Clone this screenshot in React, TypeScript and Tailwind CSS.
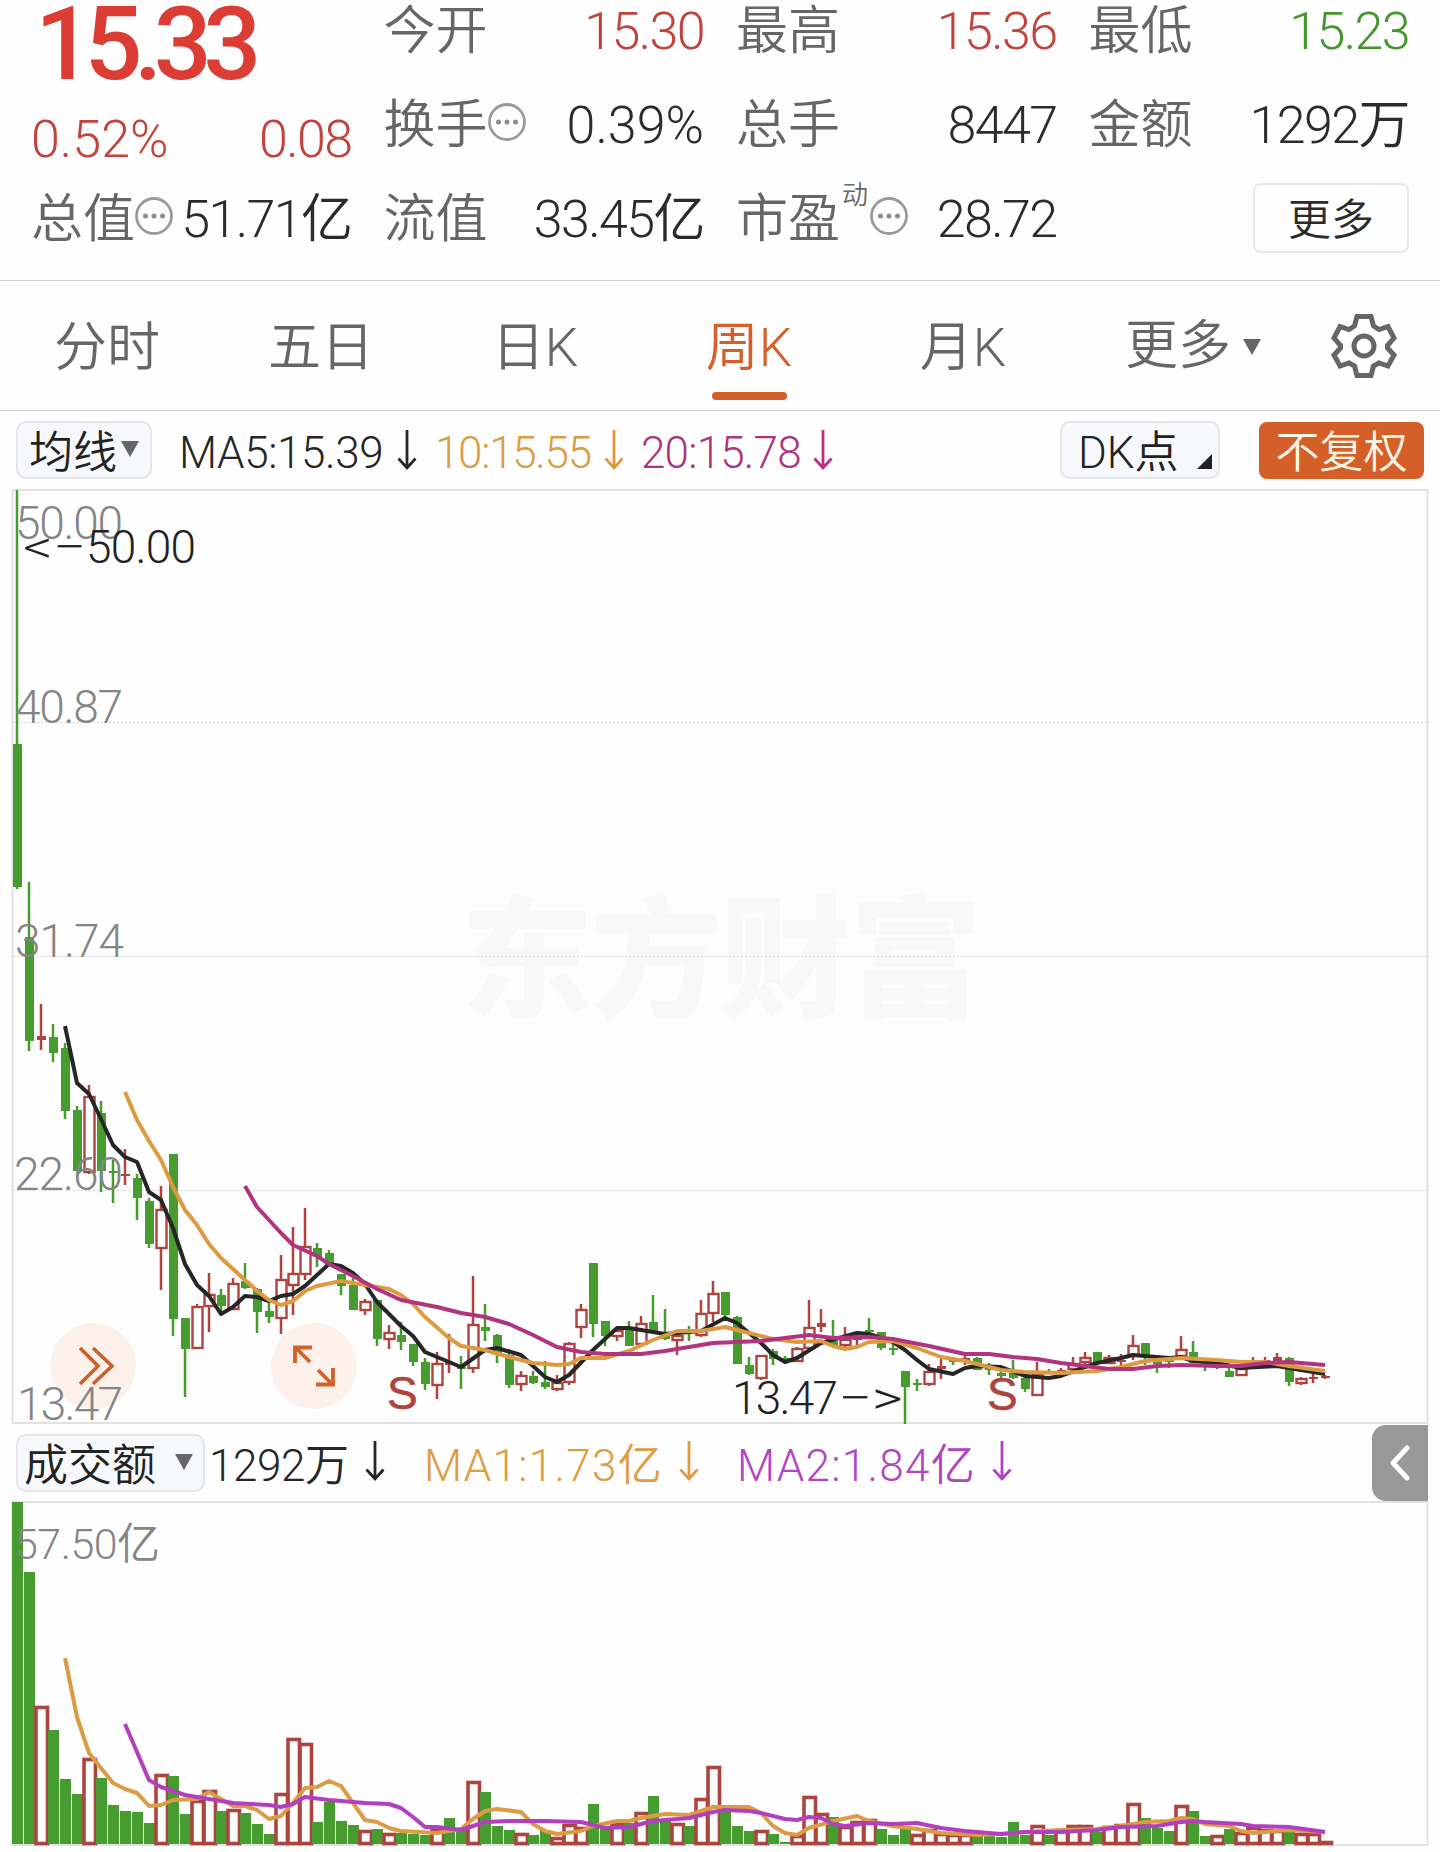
import clsx from "clsx";

type Candle = [up: 0 | 1, high: number, top: number, bottom: number, low: number];
type Volume = [up: 0 | 1, top: number];

const GREEN = "#479c2f";
const RED = "#ac453f";

// one entry per week: direction, wick top, body top, body bottom, wick bottom
const candles: Candle[] = [
  [0, 490, 744, 887, 889], [0, 882, 937, 1041, 1051], [1, 1004, 1036, 1040, 1050], [0, 1024, 1037, 1053, 1062],
  [0, 1043, 1048, 1111, 1119], [0, 1106, 1110, 1171, 1171], [1, 1085, 1096, 1172, 1174], [0, 1101, 1113, 1171, 1192],
  [0, 1160, 1171, 1173, 1203], [1, 1149, 1174, 1176, 1185], [0, 1174, 1178, 1198, 1220], [0, 1198, 1201, 1244, 1248],
  [1, 1186, 1209, 1248, 1290], [0, 1154, 1154, 1319, 1336], [0, 1318, 1318, 1349, 1397], [1, 1304, 1306, 1348, 1348],
  [1, 1273, 1294, 1306, 1332], [0, 1289, 1295, 1306, 1311], [1, 1278, 1283, 1309, 1309], [0, 1263, 1281, 1288, 1289],
  [0, 1288, 1289, 1312, 1333], [0, 1300, 1311, 1317, 1323], [1, 1255, 1279, 1318, 1334], [1, 1227, 1273, 1285, 1315],
  [1, 1208, 1246, 1274, 1280], [0, 1243, 1248, 1257, 1267], [0, 1250, 1253, 1266, 1266], [0, 1274, 1274, 1286, 1295],
  [0, 1274, 1285, 1310, 1310], [1, 1299, 1301, 1310, 1315], [0, 1300, 1300, 1339, 1346], [1, 1325, 1332, 1339, 1349],
  [0, 1322, 1335, 1342, 1350], [0, 1344, 1344, 1362, 1366], [0, 1358, 1362, 1384, 1390], [1, 1352, 1363, 1385, 1399],
  [1, 1334, 1362, 1365, 1373], [0, 1356, 1367, 1369, 1389], [1, 1276, 1324, 1368, 1373], [0, 1304, 1327, 1331, 1341],
  [0, 1334, 1335, 1355, 1363], [0, 1349, 1355, 1385, 1388], [1, 1371, 1375, 1384, 1391], [0, 1371, 1376, 1383, 1384],
  [0, 1361, 1382, 1387, 1389], [1, 1375, 1382, 1389, 1391], [1, 1342, 1343, 1382, 1385], [1, 1304, 1309, 1327, 1338],
  [0, 1263, 1263, 1324, 1337], [0, 1321, 1321, 1336, 1346], [1, 1327, 1330, 1336, 1341], [0, 1321, 1327, 1346, 1346],
  [1, 1316, 1323, 1344, 1344], [0, 1295, 1322, 1333, 1333], [0, 1309, 1335, 1339, 1340], [1, 1333, 1335, 1340, 1355],
  [0, 1326, 1329, 1332, 1341], [1, 1300, 1313, 1335, 1337], [1, 1281, 1293, 1313, 1322], [0, 1292, 1292, 1315, 1319],
  [0, 1316, 1317, 1364, 1364], [0, 1357, 1365, 1374, 1375], [1, 1355, 1355, 1378, 1380], [0, 1349, 1351, 1359, 1365],
  [0, 1356, 1358, 1361, 1362], [1, 1347, 1348, 1361, 1361], [1, 1300, 1327, 1348, 1348], [1, 1309, 1323, 1327, 1332],
  [0, 1320, 1341, 1346, 1346], [1, 1327, 1339, 1345, 1347], [1, 1335, 1338, 1340, 1345], [0, 1318, 1330, 1332, 1333],
  [0, 1332, 1332, 1348, 1350], [0, 1344, 1348, 1350, 1355], [0, 1371, 1371, 1387, 1424], [0, 1379, 1383, 1385, 1391],
  [1, 1364, 1371, 1384, 1386], [1, 1359, 1366, 1369, 1379], [0, 1357, 1360, 1362, 1365], [1, 1355, 1358, 1361, 1365],
  [0, 1357, 1358, 1370, 1370], [0, 1363, 1368, 1370, 1375], [0, 1370, 1373, 1376, 1380], [0, 1360, 1373, 1378, 1379],
  [0, 1377, 1378, 1389, 1392], [1, 1362, 1374, 1395, 1395], [0, 1369, 1371, 1373, 1374], [1, 1368, 1370, 1374, 1374],
  [1, 1357, 1363, 1369, 1369], [1, 1352, 1357, 1362, 1365], [0, 1352, 1352, 1362, 1362], [1, 1355, 1357, 1363, 1363],
  [1, 1354, 1360, 1362, 1366], [1, 1335, 1345, 1355, 1360], [0, 1343, 1343, 1355, 1365], [0, 1358, 1360, 1364, 1373],
  [0, 1357, 1360, 1362, 1368], [1, 1336, 1349, 1356, 1358], [0, 1341, 1352, 1363, 1363], [0, 1360, 1363, 1365, 1371],
  [1, 1362, 1366, 1368, 1369], [0, 1367, 1371, 1377, 1377], [1, 1368, 1368, 1375, 1376], [1, 1357, 1363, 1365, 1366],
  [1, 1357, 1360, 1363, 1363], [1, 1353, 1357, 1361, 1362], [0, 1357, 1358, 1382, 1386], [1, 1377, 1378, 1383, 1385],
  [1, 1374, 1377, 1379, 1383], [1, 1375, 1376, 1378, 1379],
];

const volumes: Volume[] = [
  [0, 1502], [0, 1572], [1, 1706], [0, 1730], [0, 1779], [0, 1794], [1, 1758], [0, 1778], [0, 1805], [0, 1811],
  [0, 1812], [0, 1823], [1, 1774], [0, 1776], [0, 1814], [1, 1800], [1, 1790], [0, 1811], [1, 1809], [0, 1813],
  [0, 1824], [0, 1834], [1, 1793], [1, 1738], [1, 1743], [0, 1822], [0, 1802], [0, 1821], [0, 1825], [1, 1830],
  [0, 1829], [1, 1833], [0, 1833], [0, 1834], [0, 1835], [1, 1829], [0, 1818], [0, 1830], [1, 1781], [0, 1792],
  [0, 1826], [0, 1830], [1, 1833], [0, 1835], [0, 1830], [1, 1837], [1, 1824], [1, 1827], [0, 1804], [0, 1828],
  [1, 1823], [0, 1823], [1, 1812], [0, 1796], [0, 1820], [1, 1823], [0, 1826], [1, 1798], [1, 1766], [0, 1812],
  [0, 1826], [0, 1831], [1, 1830], [0, 1834], [0, 1842], [1, 1835], [1, 1796], [1, 1813], [0, 1817], [1, 1826],
  [1, 1821], [1, 1819], [0, 1829], [0, 1835], [0, 1828], [1, 1834], [1, 1829], [1, 1833], [1, 1834], [1, 1834],
  [0, 1836], [0, 1836], [0, 1837], [0, 1822], [0, 1835], [1, 1825], [0, 1835], [1, 1829], [1, 1825], [1, 1825],
  [0, 1832], [1, 1826], [1, 1824], [1, 1803], [0, 1818], [0, 1828], [0, 1831], [1, 1805], [0, 1811], [0, 1836],
  [1, 1835], [0, 1829], [1, 1832], [1, 1827], [1, 1829], [1, 1830], [0, 1830], [1, 1833], [1, 1833], [1, 1841],
];

const ma5 =
  "65,1026 77,1083 89,1094 101,1119 113,1145 125,1157 137,1162 149,1192 161,1200 173,1228 185,1264 197,1285 209,1296 221,1314 233,1307 245,1296 257,1297 269,1301 281,1296 293,1294 305,1286 329,1264 341,1266 353,1273 365,1284 377,1302 389,1314 401,1326 413,1336 425,1352 461,1367 485,1350 497,1348 521,1355 533,1366 545,1377 557,1382 569,1375 593,1350 617,1328 629,1328 665,1334 701,1331 725,1318 737,1323 749,1333 761,1343 773,1355 785,1362 797,1358 821,1343 857,1333 869,1334 893,1342 905,1350 917,1360 929,1369 953,1374 965,1368 977,1366 1001,1367 1025,1376 1049,1378 1061,1376 1085,1367 1097,1363 1121,1358 1133,1355 1169,1358 1181,1357 1193,1361 1217,1363 1241,1368 1277,1366 1301,1370 1325,1374";
const ma10 =
  "125,1092 137,1120 149,1141 161,1160 173,1187 185,1210 197,1225 209,1244 221,1258 245,1280 257,1291 269,1300 281,1305 293,1301 305,1291 317,1286 341,1281 365,1285 389,1289 401,1295 413,1304 425,1317 449,1338 461,1346 485,1350 509,1357 533,1363 557,1365 569,1364 581,1358 605,1358 629,1351 653,1340 677,1331 701,1331 725,1327 749,1333 773,1339 797,1342 821,1341 833,1346 845,1349 857,1347 869,1342 893,1341 917,1348 941,1357 965,1361 1001,1370 1025,1372 1061,1373 1097,1371 1121,1367 1145,1361 1181,1358 1217,1360 1241,1362 1265,1362 1289,1366 1325,1371";
const ma20 =
  "245,1186 257,1207 281,1233 293,1245 317,1256 329,1264 353,1276 377,1289 401,1300 437,1307 461,1313 485,1317 509,1324 533,1335 557,1347 581,1352 605,1354 641,1354 665,1351 689,1347 713,1343 761,1341 785,1338 809,1335 833,1338 869,1337 893,1339 929,1346 965,1354 989,1354 1013,1357 1037,1359 1061,1363 1085,1366 1109,1369 1133,1369 1157,1366 1181,1365 1217,1366 1241,1366 1265,1363 1289,1362 1325,1365";
const volMa1 =
  "65,1658 77,1717 89,1753 113,1783 125,1789 137,1793 149,1806 161,1805 173,1800 197,1799 209,1792 221,1799 233,1806 245,1806 257,1810 269,1819 281,1816 293,1803 305,1788 317,1787 329,1781 341,1786 353,1803 365,1820 377,1822 389,1828 401,1831 437,1833 461,1829 473,1819 485,1811 497,1809 521,1812 533,1824 545,1831 557,1834 581,1831 593,1826 617,1821 629,1821 641,1818 665,1814 689,1815 701,1811 713,1807 749,1807 761,1813 773,1826 785,1833 797,1835 809,1828 833,1821 857,1816 869,1821 893,1826 917,1829 941,1833 977,1835 1001,1834 1025,1832 1061,1830 1097,1829 1121,1826 1145,1822 1169,1821 1181,1818 1193,1819 1205,1824 1229,1826 1241,1831 1253,1833 1289,1830 1325,1832";
const volMa2 =
  "125,1724 137,1752 149,1780 161,1787 185,1795 209,1799 233,1803 269,1805 281,1807 293,1804 305,1797 329,1800 365,1803 389,1804 401,1808 413,1817 425,1827 437,1827 461,1830 485,1822 509,1821 545,1821 581,1822 605,1828 629,1827 653,1821 689,1818 713,1812 725,1810 749,1811 761,1813 785,1819 797,1820 809,1817 821,1818 833,1824 845,1826 869,1823 893,1824 917,1823 941,1828 965,1831 1001,1834 1025,1832 1061,1832 1097,1830 1121,1827 1157,1826 1181,1822 1193,1821 1205,1822 1241,1824 1253,1826 1289,1827 1325,1832";

const cx = (i: number) => 17 + i * 12;

function Dots() {
  return (
    <svg viewBox="0 0 38 38" className="-mt-2 size-[38px] shrink-0" fill="none">
      <circle cx="19" cy="19" r="17.5" stroke="#999" strokeWidth="2.8" />
      <circle cx="10.5" cy="19" r="2.5" fill="#8c8c8c" />
      <circle cx="19" cy="19" r="2.5" fill="#8c8c8c" />
      <circle cx="27.5" cy="19" r="2.5" fill="#8c8c8c" />
    </svg>
  );
}

function DownArrow({ className }: { className?: string }) {
  return (
    <svg viewBox="0 0 20 42" className={clsx("-mt-1 h-[42px] w-5 shrink-0", className)} fill="none" stroke="currentColor" strokeWidth="2.8">
      <path d="M10 1 V39 M1.5 29.5 L10 39 L18.5 29.5" />
    </svg>
  );
}

function Caret({ className }: { className?: string }) {
  return (
    <svg viewBox="0 0 18 16" className={clsx("h-4 w-[18px] shrink-0", className)} fill="#666">
      <path d="M0 0 H18 L9 16 Z" />
    </svg>
  );
}

function Quote({ label, value, tone = "text-[#2b2b2b]", dots = false, mark }: {
  label: string; value: string; tone?: string; dots?: boolean; mark?: string;
}) {
  return (
    <div className="flex h-full items-center justify-between pt-1 whitespace-nowrap">
      <span className="flex items-center text-[#666]">
        {label}
        {mark && <sup className="-mt-6 ml-0.5 mr-0.5 text-[26px] leading-none">{mark}</sup>}
        {dots && <Dots />}
      </span>
      <span className={clsx(value.endsWith("%") ? "tracking-normal" : "tracking-[-1.6px]", tone)}>{value}</span>
    </div>
  );
}

function Header() {
  return (
    <section className="grid h-[281px] grid-cols-4 gap-x-8 border-b border-[#d2d2d2] pl-[31px] pr-[31px] text-[52px] leading-none">
      <div>
        <div className="flex h-[88px] items-center pl-1 text-[102px] font-medium tracking-[-8.5px] text-[#db3c33]">15.33</div>
        <div className="flex h-[100px] items-center justify-between pt-1 text-[#c0433d]">
          <span>0.52%</span>
          <span className="tracking-[-1.6px]">0.08</span>
        </div>
        <div className="h-[60px]"><Quote label="总值" value="51.71亿" dots /></div>
      </div>
      <div>
        <div className="h-[60px]"><Quote label="今开" value="15.30" tone="text-[#c0433d]" /></div>
        <div className="h-[128px]"><Quote label="换手" value="0.39%" dots /></div>
        <div className="h-[60px]"><Quote label="流值" value="33.45亿" /></div>
      </div>
      <div>
        <div className="h-[60px]"><Quote label="最高" value="15.36" tone="text-[#c0433d]" /></div>
        <div className="h-[128px]"><Quote label="总手" value="8447" /></div>
        <div className="h-[60px]"><Quote label="市盈" value="28.72" mark="动" dots /></div>
      </div>
      <div>
        <div className="h-[60px]"><Quote label="最低" value="15.23" tone="text-[#46962f]" /></div>
        <div className="h-[128px]"><Quote label="金额" value="1292万" /></div>
        <div className="flex h-[60px] items-center justify-end">
          <button className="flex h-[70px] w-[156px] items-center justify-center rounded-lg border-2 border-[#e6e7e9] pt-1 text-[43px] text-[#2b2b2b]">更多</button>
        </div>
      </div>
    </section>
  );
}

function Tabs() {
  const tabs = ["分时", "五日", "日K", "周K", "月K"];
  return (
    <nav className="flex h-[130px] border-b border-[#d2d2d2] text-[53px] leading-none text-[#666]">
      {tabs.map((t) => (
        <div key={t} className={clsx("flex w-[214px] flex-col items-center justify-end", t === "周K" && "text-[#d55f28]")}>
          <span>{t}</span>
          <span className={clsx("mb-2.5 mt-[17px] h-2 w-[75px] rounded-full", t === "周K" && "bg-[#d55f28]")} />
        </div>
      ))}
      <div className="flex w-[230px] items-center justify-center gap-3 pl-4 pt-0.5">
        更多
        <Caret />
      </div>
      <div className="flex items-center pl-[31px]">
        <svg viewBox="0 0 66 66" className="size-[66px]" fill="none" stroke="#666" strokeWidth="5">
          <path d="M26 3.5 H40 L42.5 13 L48 16.5 L57 13.5 L63 25 L56.5 32.5 V35 L63 42 L57 53 L48 50 L42.5 53 L40 62.5 H26 L23.5 53 L18 50 L9 53 L3 42 L9.5 35 V32.5 L3 25 L9 13.5 L18 16.5 L23.5 13 Z" />
          <circle cx="33" cy="33" r="10" />
        </svg>
      </div>
    </nav>
  );
}

function MaBar() {
  return (
    <div className="flex h-[78px] items-center pl-4 text-[44px] leading-none whitespace-nowrap">
      <button className="flex h-[58px] w-[136px] items-center justify-center gap-1 rounded-[10px] border-2 border-[#e3e5e9] bg-[#f6f8fb] pt-1.5 text-[#222]">
        均线
        <Caret className="-mt-2" />
      </button>
      <div className="ml-[27px] w-[218px] pt-1.5 tracking-[-0.4px] text-[#262626]">MA5:15.39</div>
      <DownArrow className="mt-0 text-[#262626]" />
      <div className="ml-[18px] w-[169px] pt-1.5 tracking-[-1.3px] text-[#d99d45]">10:15.55</div>
      <DownArrow className="mt-0 text-[#e09a3c]" />
      <div className="ml-[17px] w-[172px] pt-1.5 tracking-[-0.8px] text-[#ad347c]">20:15.78</div>
      <DownArrow className="mt-0 text-[#b8307f]" />
      <button className="ml-auto flex h-[58px] w-[160px] items-center justify-between rounded-[10px] border-2 border-[#e3e5e9] bg-[#f6f8fb] pl-4 pr-1.5 pt-1.5 text-[#222]">
        DK点
        <svg viewBox="0 0 15 15" className="mt-4 size-[15px]"><path d="M15 0 V15 H0 Z" fill="#222" /></svg>
      </button>
      <button className="ml-[39px] mr-4 flex h-[57px] w-[165px] items-center justify-center rounded-lg bg-[#d55f28] pt-1.5 text-[#fff5e6]">不复权</button>
    </div>
  );
}

function PriceChart() {
  return (
    <svg viewBox="0 489 1440 936" className="block h-[936px] w-full" fill="none">
      <text x="461" y="1007" textLength="520" fontSize="132" fontWeight="900" fill="#f8f8f8">东方财富</text>
      <rect x="12.5" y="490" width="1415" height="933" stroke="#e2e2e2" strokeWidth="2" />
      {[722.5, 956.5, 1190.5].map((y) => (
        <path key={y} d={`M13 ${y} H1427`} stroke="#d4d4d4" strokeDasharray="2 2" />
      ))}
      {candles.map(([up, high, top, bottom, low], i) => {
        const color = up ? RED : GREEN;
        const hollow = up && bottom - top > 4;
        return (
          <g key={i}>
            <path d={`M${cx(i)} ${high} V${hollow ? top : low} M${cx(i)} ${bottom} V${low}`} stroke={color} strokeWidth="2.5" />
            {hollow ? (
              <rect x={cx(i) - 4.5} y={top + 1} width="10" height={bottom - top - 1} stroke={color} strokeWidth="2.4" />
            ) : (
              <rect x={cx(i) - 4} y={top} width="9" height={bottom - top} fill={color} />
            )}
          </g>
        );
      })}
      <g strokeWidth="4" strokeLinejoin="round">
        <polyline points={ma5} stroke="#262626" />
        <polyline points={ma10} stroke="#de9a40" />
        <polyline points={ma20} stroke="#b1347e" />
      </g>

      {/* floating controls */}
      <circle cx="93" cy="1366" r="43" fill="#fcf0ea" />
      <path d="M80 1348 L98 1366 L80 1384 M93 1348 L112 1366 L93 1384" stroke="#cb602b" strokeWidth="3.6" />
      <circle cx="314" cy="1366" r="43" fill="#fcf0ea" />
      <path d="M295 1363 V1347.5 H312 M296 1348 L310 1362 M318 1370 L333 1385 M316 1384.5 H333 V1368" stroke="#d0622c" strokeWidth="3.8" />

      <g fontSize="46" fill="#858585">
        <text x="15" y="539" textLength="108">50.00</text>
        <text x="15" y="723" textLength="108">40.87</text>
        <text x="15" y="957" textLength="109">31.74</text>
        <text x="14" y="1190" textLength="109">22.60</text>
        <text x="17" y="1420" textLength="106">13.47</text>
      </g>
      <g fontSize="46" fill="#222">
        <text x="23" y="563" textLength="63" lengthAdjust="spacingAndGlyphs">&lt;−</text>
        <text x="86" y="563" textLength="110">50.00</text>
        <text x="732" y="1414" textLength="106">13.47</text>
        <text x="838" y="1414" textLength="65" lengthAdjust="spacingAndGlyphs">−&gt;</text>
      </g>
      <g className="font-['Liberation_Sans',sans-serif]" fontSize="46" fontWeight="400" fill="#ac453f" stroke="#ac453f" strokeWidth="0.6">
        <text x="387" y="1409">S</text>
        <text x="987" y="1410">S</text>
      </g>
    </svg>
  );
}

function VolumeBar() {
  return (
    <div className="flex h-[76px] items-center pl-4 text-[44px] leading-none whitespace-nowrap">
      <button className="flex h-[58px] w-[189px] items-center justify-between rounded-[10px] border-2 border-[#e3e5e9] bg-[#f6f8fb] pl-1.5 pr-2.5 pt-1.5 text-[#222]">
        成交额
        <Caret className="-mt-2" />
      </button>
      <div className="ml-1 w-[156px] pt-1.5 tracking-[-0.4px] text-[#262626]">1292万</div>
      <DownArrow className="text-[#262626]" />
      <div className="ml-[39px] w-[255px] pt-1.5 tracking-[1.3px] text-[#de9d43]">MA1:1.73亿</div>
      <DownArrow className="text-[#de9d43]" />
      <div className="ml-[38px] w-[255px] pt-1.5 tracking-[1.3px] text-[#b244c4]">MA2:1.84亿</div>
      <DownArrow className="text-[#b244c4]" />
      <button className="ml-auto mr-3 flex h-[76px] w-14 items-center justify-center rounded-l-[14px] bg-[#999]">
        <svg viewBox="0 0 20 36" className="h-9 w-5" fill="none" stroke="#fff" strokeWidth="5" strokeLinecap="round" strokeLinejoin="round">
          <path d="M17 3 L3 18 L17 33" />
        </svg>
      </button>
    </div>
  );
}

function VolumeChart() {
  return (
    <svg viewBox="0 1501 1440 351" className="block h-[351px] w-full" fill="none">
      <rect x="12.5" y="1502" width="1415" height="343" stroke="#e2e2e2" strokeWidth="2" />
      {volumes.map(([up, top], i) =>
        up ? (
          <rect key={i} x={cx(i) - 5} y={top + 1.5} width="11.5" height={Math.max(1843.5 - top - 1.5, 0.5)} stroke={RED} strokeWidth="3.6" />
        ) : (
          <rect key={i} x={cx(i) - 5} y={top} width="11" height={1844 - top} fill={GREEN} />
        )
      )}
      <g strokeWidth="4" strokeLinejoin="round">
        <polyline points={volMa1} stroke="#dc9b45" />
        <polyline points={volMa2} stroke="#b13fc0" />
      </g>
      <text x="14" y="1559" textLength="146" fontSize="43" fill="#858585">57.50亿</text>
    </svg>
  );
}

export default function App() {
  return (
    <main className="h-[1852px] w-[1440px] overflow-hidden bg-[#fefefe] font-['Roboto','Noto_Sans_CJK_SC',sans-serif] font-[350]">
      <Header />
      <Tabs />
      <MaBar />
      <PriceChart />
      <VolumeBar />
      <VolumeChart />
    </main>
  );
}
